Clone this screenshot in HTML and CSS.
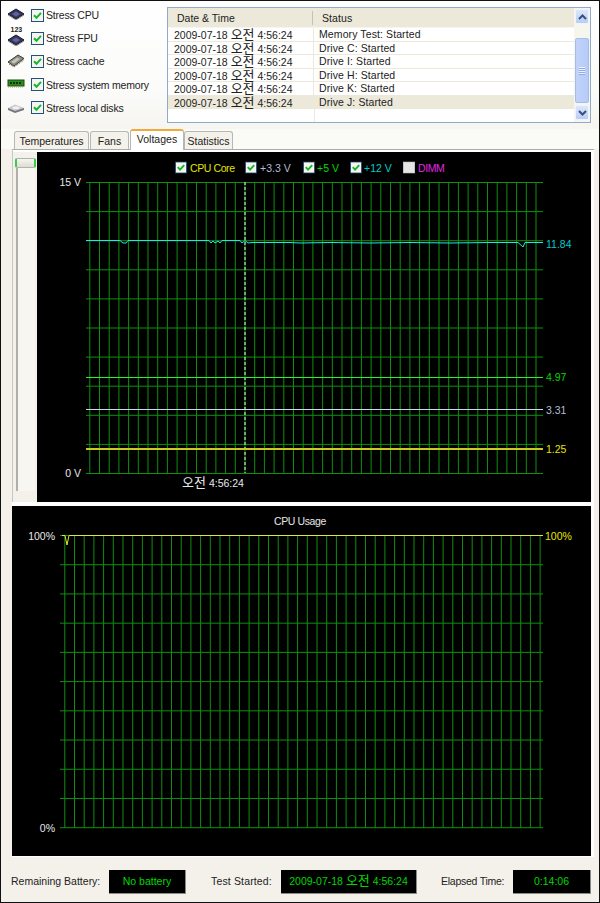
FILE: index.html
```html
<!DOCTYPE html>
<html lang="en">
<head>
<meta charset="utf-8">
<title>System Stability Test</title>
<link rel="stylesheet" href="styles.css">
</head>
<body>
<svg class="defs" width="0" height="0" aria-hidden="true">
  <defs>
    <symbol id="chk" viewBox="0 0 13 13">
      <rect x="0.5" y="0.5" width="12" height="12" fill="#f4f4f0" stroke="#24507e"/>
      <path d="M3 6.2l2.5 2.6L10 3.8" fill="none" stroke="#17b52a" stroke-width="2"/>
    </symbol>
    <symbol id="unchk" viewBox="0 0 13 13">
      <rect x="0.5" y="0.5" width="12" height="12" fill="#e6e6e2" stroke="#c8c8d0"/>
    </symbol>
    <symbol id="chip" viewBox="0 0 18 12">
      <path d="M1 6l8-5 8 5-8 5z" fill="#34345e" stroke="#15152c"/>
      <path d="M5 6l4-2.500 4 2.500-4 2.500z" fill="#62629a"/>
      <path d="M1 7l8 5 8-5" fill="none" stroke="#777" stroke-width="0.800"/>
    </symbol>
  </defs>
</svg>
<div class="window">
  <div class="top">
    <ul class="stress">
      <li class="stress-row">
        <svg class="icon" viewBox="0 0 18 18"><use href="#chip" y="2" width="18" height="12"/></svg>
        <svg class="check"><use href="#chk"/></svg>
        <span>Stress CPU</span>
      </li>
      <li class="stress-row">
        <svg class="icon" viewBox="0 0 18 18"><text class="fpu-digits" x="3.500" y="3">123</text><use href="#chip" y="5" width="18" height="12"/></svg>
        <svg class="check"><use href="#chk"/></svg>
        <span>Stress FPU</span>
      </li>
      <li class="stress-row">
        <svg class="icon" viewBox="0 0 18 18"><path d="M1 10l10-7 6 3.500-10 7.500z" fill="#8d8d80" stroke="#3a3a34"/><path d="M4 10l6-4.500 3 1.500-6 4.500z" fill="#c4c4b8"/><path d="M2 12l5 3 10-7" fill="none" stroke="#555" stroke-dasharray="1 1"/></svg>
        <svg class="check"><use href="#chk"/></svg>
        <span>Stress cache</span>
      </li>
      <li class="stress-row">
        <svg class="icon" viewBox="0 0 18 18"><rect x="1" y="4" width="16" height="6" fill="#2c8a1e" stroke="#174d10"/><path d="M3 6h2v2h-2zM6 6h2v2h-2zM9 6h2v2h-2zM12 6h2v2h-2z" fill="#0e300a"/><path d="M1 11h16" stroke="#b8a24a" stroke-dasharray="1 1"/></svg>
        <svg class="check"><use href="#chk"/></svg>
        <span>Stress system memory</span>
      </li>
      <li class="stress-row">
        <svg class="icon" viewBox="0 0 18 18"><path d="M1 9v2l7 3 9-3v-2z" fill="#77777c"/><path d="M1 9l7-3.500 9 3.500-9 3z" fill="#c9c9cd"/><ellipse cx="9" cy="8.800" rx="3.500" ry="1.500" fill="#f0f0f2"/></svg>
        <svg class="check"><use href="#chk"/></svg>
        <span>Stress local disks</span>
      </li>
    </ul>
    <div class="log">
      <div class="log-main">
        <div class="log-head">
          <div class="col-date head-date">Date &amp; Time</div>
          <div class="col-status head-status">Status</div>
        </div>
        <div class="log-row"><div class="col-date">2009-07-18 <span class="ko">오전</span> 4:56:24</div><div class="col-status">Memory Test: Started</div></div>
        <div class="log-row"><div class="col-date">2009-07-18 <span class="ko">오전</span> 4:56:24</div><div class="col-status">Drive C: Started</div></div>
        <div class="log-row"><div class="col-date">2009-07-18 <span class="ko">오전</span> 4:56:24</div><div class="col-status">Drive I: Started</div></div>
        <div class="log-row"><div class="col-date">2009-07-18 <span class="ko">오전</span> 4:56:24</div><div class="col-status">Drive H: Started</div></div>
        <div class="log-row"><div class="col-date">2009-07-18 <span class="ko">오전</span> 4:56:24</div><div class="col-status">Drive K: Started</div></div>
        <div class="log-row is-selected"><div class="col-date">2009-07-18 <span class="ko">오전</span> 4:56:24</div><div class="col-status">Drive J: Started</div></div>
        <div class="log-blank"></div>
      </div>
      <div class="scrollbar">
        <div class="sb-btn"><svg width="9" height="6" viewBox="0 0 9 6"><path d="M1 5l3.500-3.500L8 5" fill="none" stroke="#36507f" stroke-width="2"/></svg></div>
        <div class="sb-thumb"><span class="sb-grip"></span></div>
        <div class="sb-btn"><svg width="9" height="6" viewBox="0 0 9 6"><path d="M1 1l3.500 3.500L8 1" fill="none" stroke="#36507f" stroke-width="2"/></svg></div>
      </div>
    </div>
  </div>

  <div class="tabs">
    <div class="tab tab-temp">Temperatures</div>
    <div class="tab tab-fans">Fans</div>
    <div class="tab tab-volt is-active">Voltages</div>
    <div class="tab tab-stat">Statistics</div>
  </div>

  <div class="panel">
    <div class="panel-upper">
      <div class="slider">
        <div class="slider-thumb"></div>
        <div class="slider-track"></div>
      </div>
      <svg class="chart" width="554" height="350" viewBox="37 152 554 350">
        <rect class="bg" x="37" y="152" width="554" height="350"/>
        <use href="#chk" x="175" y="161.500" width="12" height="12"/>
        <text class="t-yellow tight" x="190" y="172">CPU Core</text>
        <use href="#chk" x="245" y="161.500" width="12" height="12"/>
        <text class="t-slate" x="260" y="172">+3.3 V</text>
        <use href="#chk" x="303" y="161.500" width="12" height="12"/>
        <text class="t-green" x="317" y="172">+5 V</text>
        <use href="#chk" x="350" y="161.500" width="12" height="12"/>
        <text class="t-cyan" x="364" y="172">+12 V</text>
        <use href="#unchk" x="403" y="161.500" width="12" height="12"/>
        <text class="t-magenta tight" x="418" y="172">DIMM</text>

        <path class="grid" d="M86 182.500h457m-457 29.100h457m-457 29.100h457m-457 29.100h457m-457 29.100h457m-457 29.100h457m-457 29.100h457m-457 29.100h457m-457 29.100h457m-457 29.100h457m-457 29.100h457"/>
        <path class="grid" d="M89.800 182v292m9.700-292v292m9.700-292v292m9.700-292v292m9.700-292v292m9.700-292v292m9.700-292v292m9.700-292v292m9.700-292v292m9.700-292v292m9.700-292v292m9.700-292v292m9.700-292v292m9.700-292v292m9.700-292v292m9.700-292v292m9.700-292v292m9.700-292v292m9.700-292v292m9.700-292v292m9.700-292v292m9.700-292v292m9.700-292v292m9.700-292v292m9.700-292v292m9.700-292v292m9.700-292v292m9.700-292v292m9.700-292v292m9.700-292v292m9.700-292v292m9.700-292v292m9.700-292v292m9.700-292v292m9.700-292v292m9.700-292v292m9.700-292v292m9.700-292v292m9.700-292v292m9.700-292v292m9.700-292v292m9.700-292v292m9.700-292v292m9.700-292v292m9.700-292v292m9.700-292v292m9.700-292v292"/>
        <line class="cursor" x1="245" y1="182" x2="245" y2="473"/>

        <polyline class="trace cyan" points="86,240.500 120,240.500 123,243 126,243 128,240.500 209,240.500 211,243 213,241 215,243 218,241 220,243 222,240.500 240,240.500 242,243 245,240.500 248,243 252,242.500 290,242.500 300,243 330,242.500 370,243 410,242.500 450,243 490,242.500 518,242.500 523,247 525,242.500 543,242.500"/>
        <line class="trace green" x1="86" y1="377.500" x2="543" y2="377.500"/>
        <line class="trace slate" x1="86" y1="409.500" x2="543" y2="409.500"/>
        <line class="trace yellow" x1="86" y1="449" x2="543" y2="449"/>

        <text class="t-white" x="81" y="186" text-anchor="end">15 V</text>
        <text class="t-white" x="81" y="477" text-anchor="end">0 V</text>
        <text class="t-white" x="213" y="487" text-anchor="middle"><tspan class="ko">오전</tspan> 4:56:24</text>
        <text class="t-cyan" x="546" y="248">11.84</text>
        <text class="t-green" x="546" y="381">4.97</text>
        <text class="t-slate" x="546" y="414">3.31</text>
        <text class="t-yellow" x="546" y="453">1.25</text>
      </svg>
    </div>
    <div class="panel-gap"></div>
    <svg class="chart" width="579" height="350" viewBox="12 506 579 350">
      <rect class="bg" x="12" y="506" width="579" height="350"/>
      <text class="t-white tight" x="300" y="525" text-anchor="middle">CPU Usage</text>
      <path class="grid" d="M60 535.500h483m-483 29.220h483m-483 29.220h483m-483 29.220h483m-483 29.220h483m-483 29.220h483m-483 29.220h483m-483 29.220h483m-483 29.220h483m-483 29.220h483m-483 29.220h483"/>
      <path class="grid" d="M64.800 535v293m9.700-293v293m9.700-293v293m9.700-293v293m9.700-293v293m9.700-293v293m9.700-293v293m9.700-293v293m9.700-293v293m9.700-293v293m9.700-293v293m9.700-293v293m9.700-293v293m9.700-293v293m9.700-293v293m9.700-293v293m9.700-293v293m9.700-293v293m9.700-293v293m9.700-293v293m9.700-293v293m9.700-293v293m9.700-293v293m9.700-293v293m9.700-293v293m9.700-293v293m9.700-293v293m9.700-293v293m9.700-293v293m9.700-293v293m9.700-293v293m9.700-293v293m9.700-293v293m9.700-293v293m9.700-293v293m9.700-293v293m9.700-293v293m9.700-293v293m9.700-293v293m9.700-293v293m9.700-293v293m9.700-293v293m9.700-293v293m9.700-293v293m9.700-293v293m9.700-293v293m9.700-293v293m9.700-293v293m9.700-293v293m9.700-293v293"/>
      <polyline class="trace usage" points="62,535.500 65,535.500 67,545 69,535.500 543,535.500"/>
      <text class="t-white" x="55" y="540" text-anchor="end">100%</text>
      <text class="t-white" x="55" y="832" text-anchor="end">0%</text>
      <text class="t-yellow" x="545" y="540">100%</text>
    </svg>
  </div>

  <div class="footer">
    <div class="f-label">Remaining Battery:</div>
    <div class="f-box">No battery</div>
    <div class="f-label f-indent f-wide">Test Started:</div>
    <div class="f-box">2009-07-18 <span class="ko">오전</span> 4:56:24</div>
    <div class="f-label f-indent f-narrow">Elapsed Time:</div>
    <div class="f-box">0:14:06</div>
  </div>
</div>
</body>
</html>
```
FILE: styles.css
```css
* { box-sizing: border-box; }
html, body { margin: 0; padding: 0; }
body {
  width: 600px;
  height: 903px;
  overflow: hidden;
  font-family: "Liberation Sans", "Noto Sans CJK KR", sans-serif;
  font-size: 10.5px;
  color: #222;
}
.defs { display: block; height: 0; }
.ko { font-size: 13px; line-height: 1; }
.window {
  width: 600px;
  height: 903px;
  background: #f3f1ea;
  border: 1px solid #111;
  overflow: hidden;
}

/* Top area */
.top {
  display: flex;
  height: 128px;
  padding: 6px 8px 0 6px;
  background: linear-gradient(#fff, #fbfbfa 70%, #f6f5f0);
}
.stress {
  list-style: none;
  margin: -3.6px 0 0;
  padding: 0;
  width: 160px;
  letter-spacing: -0.2px;
}
.stress-row {
  display: flex;
  align-items: center;
  height: 23.2px;
}
.icon { width: 18px; height: 18px; margin-right: 6px; flex: none; overflow: visible; }
.check { width: 13px; height: 13px; margin-right: 2px; flex: none; }
.fpu-digits { font-size: 7px; font-weight: 700; fill: #1a1a1a; letter-spacing: 0; }

.log {
  display: flex;
  width: 424px;
  height: 116px;
  background: #fff;
  border: 1px solid #8faacb;
}
.log-main { width: 406px; }
.log-head {
  display: flex;
  height: 20px;
  align-items: center;
  background: #ece9da;
  border-bottom: 1px solid #f6f5ee;
}
.col-date { width: 146px; padding-left: 6px; white-space: nowrap; }
.col-status { padding-left: 5px; white-space: nowrap; letter-spacing: 0.1px; }
.head-date { padding-left: 9px; border-right: 1px solid #c5c2b2; height: 14px; line-height: 14px; width: 145px; }
.head-status { padding-left: 9px; }
.log-row {
  display: flex;
  height: 13.5px;
  line-height: 13px;
  border-bottom: 1px solid #ece9da;
}
.log-row .col-date { border-right: 1px solid #ece9da; }
.is-selected { background: #ece9da; }
.log-blank { height: 13px; margin-left: 146px; border-left: 1px solid #ece9da; }

.scrollbar {
  display: flex;
  flex-direction: column;
  width: 16px;
  padding: 1px;
  background: #f6f5ee;
}
.sb-btn {
  display: flex;
  align-items: center;
  justify-content: center;
  height: 15px;
  background: linear-gradient(#dce7fb, #b8cdf5);
  border: 1px solid #eef3fd;
  border-radius: 2px;
}
.sb-thumb {
  display: flex;
  align-items: center;
  justify-content: center;
  height: 65px;
  margin: 14px 0 2px;
  background: linear-gradient(90deg, #c2d3fa, #b6cbf8);
  border: 1px solid #a4bced;
  border-radius: 2px;
}
.sb-grip {
  width: 6px;
  height: 8px;
  background: repeating-linear-gradient(#eef3fe 0 1px, #8fa9e4 1px 2px);
}

/* Tabs */
.tabs {
  display: flex;
  align-items: flex-end;
  height: 20px;
  padding-left: 13px;
  background: #fafaf7;
}
.tab {
  height: 18px;
  line-height: 18px;
  text-align: center;
  background: #f4f2ea;
  border: 1px solid #b4b9b6;
  border-bottom: 0;
  border-radius: 3px 3px 0 0;
}
.tab-temp { width: 75px; margin-right: 1px; }
.tab-fans { width: 39px; margin-right: 1px; }
.tab-volt { width: 54px; }
.tab-stat { width: 49px; }
.is-active {
  height: 21px;
  line-height: 16px;
  background: #fff;
  border-top: 2px solid #f2a83a;
  position: relative;
  top: 1px;
}

/* Panel */
.panel {
  width: 582px;
  height: 708px;
  margin-left: 11px;
  background: #fff;
}
.panel-upper {
  display: flex;
  height: 353px;
  padding-top: 2px;
  border-top: 1px solid #a9aeac;
  border-left: 1px solid #c5c8c6;
}
.slider {
  width: 24px;
  height: 350px;
  background: #f3f1ea;
}
.slider-thumb {
  width: 21px;
  height: 10px;
  margin: 6px 0 0 2px;
  background: linear-gradient(#f6f6f0, #dddcd2);
  border: 1px solid #b0b4b0;
  border-left: 2px solid #3ac94a;
  border-right: 2px solid #3ac94a;
  border-radius: 2px;
}
.slider-track {
  width: 19px;
  height: 323px;
  margin-left: 3px;
  background: #f7f6f0;
  border-left: 2px solid #b0b0aa;
}
.panel-gap { height: 4px; }
.chart { display: block; }
.bg { fill: #000; }

.grid { stroke: #0e900e; stroke-width: 1; fill: none; }
.cursor { stroke: #e6ffe6; stroke-width: 1; stroke-dasharray: 3 2; }
.trace { fill: none; stroke-width: 1; }
.cyan { stroke: #1fe8e8; }
.green { stroke: #2ff02f; }
.slate { stroke: #cfd6ec; }
.yellow { stroke: #c8c81e; stroke-width: 2; }
.usage { stroke: #e4e43a; }

.chart text { font-family: "Liberation Sans", "Noto Sans CJK KR", sans-serif; font-size: 10.5px; }
.chart .ko { font-size: 13px; }
.chart .tight { letter-spacing: -0.4px; }
.t-white { fill: #e8e8e8; }
.t-yellow { fill: #e4e400; }
.t-slate { fill: #b4bcd4; }
.t-green { fill: #00d800; }
.t-cyan { fill: #00cccc; }
.t-magenta { fill: #e028e0; }

/* Footer */
.footer {
  display: grid;
  grid-template-columns: 98px 77px 95px 136px 96px 78px;
  height: 23px;
  margin-top: 13px;
  margin-left: 10px;
  line-height: 23px;
}
.f-label { white-space: nowrap; }
.f-indent { padding-left: 25px; }
.f-wide { letter-spacing: 0.15px; }
.f-narrow { padding-left: 24px; letter-spacing: -0.25px; }
.f-box {
  background: #000;
  color: #00d800;
  text-align: center;
  white-space: nowrap;
  border-right: 1px solid #8a8a84;
  border-bottom: 1px solid #8a8a84;
}
```
